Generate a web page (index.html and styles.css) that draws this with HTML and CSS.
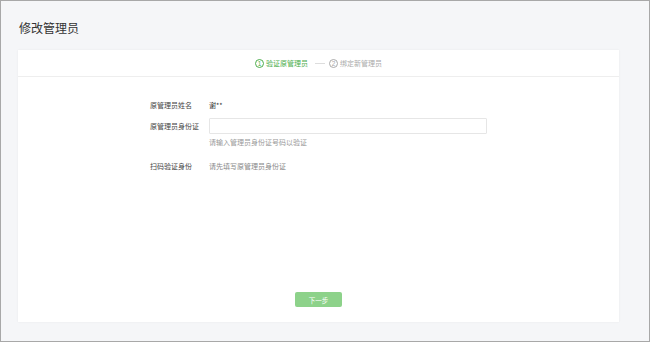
FILE: index.html
```html
<!DOCTYPE html>
<html lang="zh-CN">
<head>
    <meta charset="UTF-8">
    <meta name="viewport" content="width=device-width, initial-scale=1.0">
    <title>修改管理员</title>
    <link rel="stylesheet" href="styles.css">
</head>
<body>
    <h1 class="page-title">修改管理员</h1>

    <div class="card">
        <div class="steps">
            <div class="step active"><span class="step-num">1</span>验证原管理员</div>
            <span class="step-line"></span>
            <div class="step"><span class="step-num">2</span>绑定新管理员</div>
        </div>

        <div class="form">
            <div class="row">
                <label class="label">原管理员姓名</label>
                <div class="value">谢**</div>
            </div>
            <div class="row row-input">
                <label class="label" for="idcard">原管理员身份证</label>
                <input type="text" id="idcard" class="input">
            </div>
            <div class="hint">请输入管理员身份证号码以验证</div>
            <div class="row row-scan">
                <label class="label">扫码验证身份</label>
                <div class="value muted">请先填写原管理员身份证</div>
            </div>
        </div>

        <div class="footer">
            <button class="btn" disabled>下一步</button>
        </div>
    </div>
</body>
</html>
```

FILE: styles.css
```css
* {
    box-sizing: border-box;
}
html, body {
    margin: 0;
    padding: 0;
}
body {
    height: 342px;
    border: 1px solid #a8a8a8;
    background: #f5f6f8;
    font-family: "Noto Sans CJK SC", "Liberation Sans", sans-serif;
    color: #333;
    padding: 19px 30px 0 17px;
}
.page-title {
    margin: 0 0 14px 1px;
    font-size: 12px;
    line-height: 16px;
    font-weight: normal;
    color: #333;
}
.card {
    height: 272px;
    background: #fff;
    box-shadow: 0 0 2px rgba(0, 0, 0, 0.06);
    display: flex;
    flex-direction: column;
}
.steps {
    height: 27px;
    border-bottom: 1px solid #eeeeee;
    display: flex;
    justify-content: center;
    align-items: center;
    font-size: 7px;
    color: #aaa;
}
.step {
    display: flex;
    align-items: center;
}
.step.active {
    color: #4cae4c;
}
.step-num {
    width: 9px;
    height: 9px;
    border: 1px solid currentColor;
    border-radius: 50%;
    font-size: 6.5px;
    line-height: 7px;
    text-align: center;
    margin-right: 2px;
    font-family: "Liberation Sans", sans-serif;
}
.step-line {
    width: 10px;
    height: 1px;
    background: #ddd;
    margin: 0 4px 0 7px;
}
.form {
    flex: 1;
    padding: 20px 0 0 132px;
    font-size: 7px;
}
.row {
    display: flex;
    align-items: center;
    line-height: 16px;
}
.label {
    width: 59px;
    color: #444;
}
.value {
    color: #333;
}
.muted {
    color: #888;
}
.row-input {
    margin-top: 5px;
}
.input {
    width: 278px;
    height: 16px;
    border: 1px solid #e6e6e6;
    border-radius: 1px;
    padding: 0 4px;
    font-size: 7px;
    outline: none;
}
.hint {
    margin: 2px 0 0 59px;
    line-height: 12px;
    color: #999;
}
.row-scan {
    margin-top: 10px;
}
.footer {
    display: flex;
    justify-content: center;
    padding: 0 0 15px 0;
}
.btn {
    width: 47px;
    height: 15px;
    border: none;
    border-radius: 2px;
    background: #8dd28a;
    color: #fff;
    font-family: "Noto Sans CJK SC", "Liberation Sans", sans-serif;
    font-size: 6.5px;
    padding: 0;
}
```
